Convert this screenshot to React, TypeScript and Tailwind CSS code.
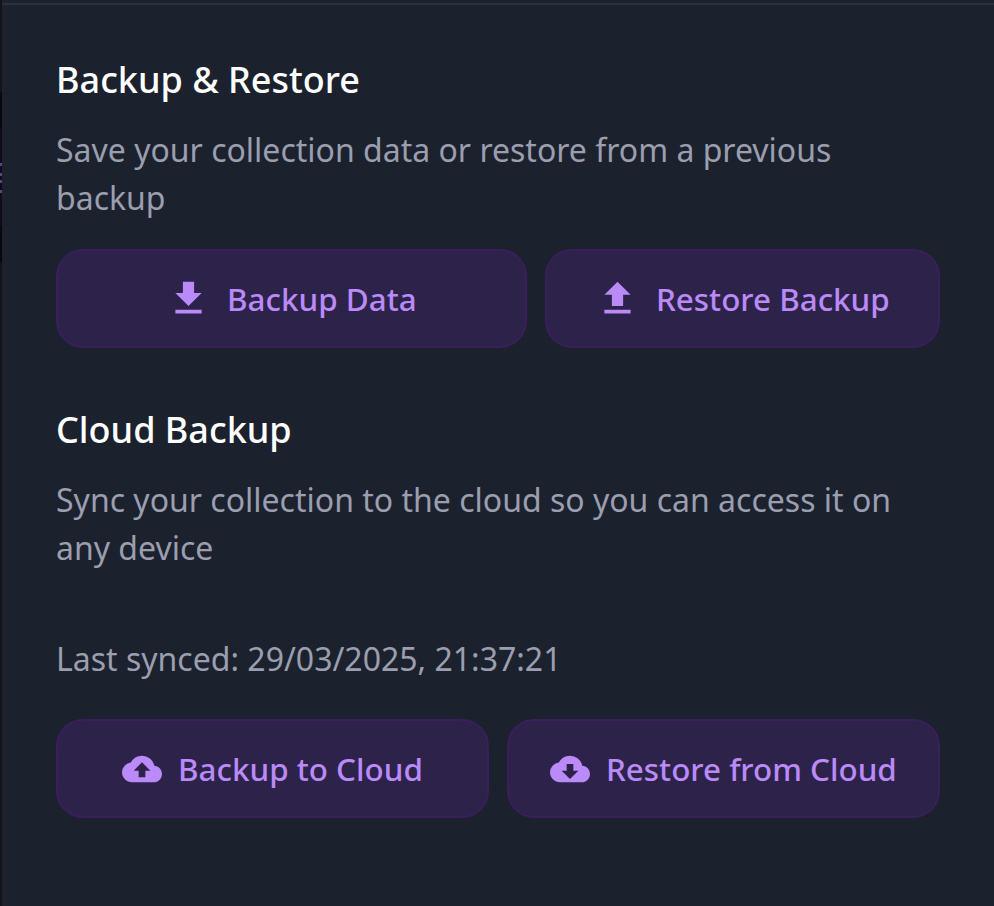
import React from "react";
import { MdBackup, MdCloudDownload } from "react-icons/md";

function Action({ icon, label, className }: { icon: React.ReactNode; label: string; className: string }) {
  return (
    <button className={"flex h-[99px] shrink-0 items-center gap-4 rounded-[27px] border-2 border-[#391f5c] bg-[#2d2249] text-[31.4px] font-medium whitespace-nowrap text-[#b98af8] " + className}>
      {icon}
      <span>{label}</span>
    </button>
  );
}

function ArrowIcon({ d }: { d: string }) {
  return (
    <svg viewBox="0 0 24 24" className="size-[45px]" fill="currentColor">
      <path d={d} />
    </svg>
  );
}

export default function App() {
  return (
    <div className="flex h-[906px] w-[994px] bg-[#1c212e] font-['Noto_Sans',sans-serif]">
      <div className="w-[2px] bg-[#11131d]">
        <div className="h-[92px]" />
        <div className="h-[36px] bg-[#07090f]" />
        <div className="flex h-[98px] flex-col bg-[#100a1c] pt-[35px]">
          <i className="h-[3px] bg-[#5f4287]" />
          <i className="mt-[7px] h-[3px] bg-[#5f4287]" />
          <i className="mt-[4px] h-[3px] bg-[#5f4287]" />
          <i className="mt-[7px] h-[3px] bg-[#5f4287]" />
        </div>
        <div className="h-[37px] bg-[#07090f]" />
      </div>
      <main className="mt-[3px] w-[992px] border-t-2 border-[#2b303d] pl-[54px] text-[32px] leading-[48px] text-[#9b9eae]">
        <h2 className="pt-[48px] text-[36px] leading-[54px] font-medium text-white">Backup &amp; Restore</h2>
        <p className="pt-[19px]">Save your collection data or restore from a previous<br />backup</p>
        <div className="flex gap-[18px] pt-[27px]">
          <Action className="w-[471px] pl-[108px]" icon={<ArrowIcon d="M19 9h-4V3H9v6H5l7 7 7-7zM5 18v2h14v-2H5z" />} label="Backup Data" />
          <Action className="w-[395px] pl-[48px]" icon={<ArrowIcon d="M9 16h6v-6h4l-7-7-7 7h4v6zM5 18h14v2H5z" />} label="Restore Backup" />
        </div>
        <h2 className="pt-[55px] text-[36px] leading-[54px] font-medium text-white">Cloud Backup</h2>
        <p className="pt-[19px]">Sync your collection to the cloud so you can access it on<br />any device</p>
        <p className="pt-[63px]">Last synced: 29/03/2025, 21:37:21</p>
        <div className="flex gap-[18px] pt-[36px]">
          <Action className="w-[433px] pl-[64px]" icon={<MdBackup size={40} />} label="Backup to Cloud" />
          <Action className="w-[433px] pl-[41px]" icon={<MdCloudDownload size={40} />} label="Restore from Cloud" />
        </div>
      </main>
    </div>
  );
}
